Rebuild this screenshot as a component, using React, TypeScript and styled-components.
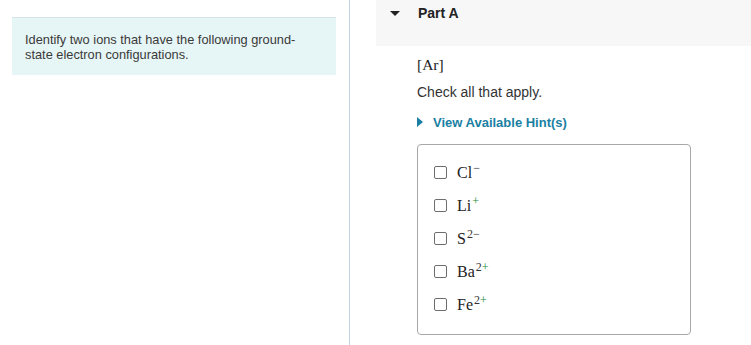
import React from 'react';
import styled, { createGlobalStyle } from 'styled-components';

const GlobalStyle = createGlobalStyle`
  html, body { margin: 0; padding: 0; background: #fff; }
  body { font-family: "Liberation Sans", Arial, sans-serif; color: #333; }
`;

const Page = styled.div`
  display: flex;
  width: 751px;
  height: 345px;
  overflow: hidden;
`;

const LeftColumn = styled.div`
  width: 350px;
  padding: 17px 13px 0 12px;
  box-sizing: border-box;
  border-right: 1px solid #c3d5e6;
`;

const Prompt = styled.div`
  background: #e6f5f5;
  border-top: 1px solid #d3e3ea;
  padding: 14px 12px 13px 13px;
  font-size: 12.8px;
  line-height: 15px;
  color: #3a3a3a;
`;

const RightColumn = styled.div`
  flex: 1;
  padding-left: 26px;
`;

const PartHeader = styled.div`
  display: flex;
  align-items: flex-start;
  gap: 18px;
  height: 46px;
  background: #f7f7f7;
  padding: 5px 0 0 14px;
  box-sizing: border-box;
  font-weight: bold;
  font-size: 14px;
  color: #222;
`;

const Caret = styled.span<{ dir: 'down' | 'right' }>`
  display: inline-block;
  width: 0;
  height: 0;
  ${({ dir }) =>
    dir === 'down'
      ? `border-left: 5.5px solid transparent; border-right: 5.5px solid transparent; border-top: 5px solid #222; margin-top: 6px;`
      : `border-top: 5px solid transparent; border-bottom: 5px solid transparent; border-left: 6px solid #1a7fa3; margin-top: 2px;`}
`;

const Body = styled.div`
  padding-left: 41px;
  padding-top: 10px;
`;

const MathText = styled.span`
  font-family: "Liberation Serif", "Times New Roman", serif;
  color: #222;
`;

const Config = styled.div`
  font-size: 15.5px;
  height: 20px;
`;

const Instruction = styled.div`
  font-size: 14px;
  margin-top: 8px;
  color: #333;
`;

const HintLink = styled.div`
  display: flex;
  align-items: flex-start;
  gap: 10px;
  margin-top: 15px;
  font-size: 13px;
  font-weight: bold;
  color: #1a7fa3;
`;

const OptionsBox = styled.div`
  margin-top: 14px;
  width: 274px;
  height: 191px;
  box-sizing: border-box;
  border: 1px solid #a8a8a8;
  border-radius: 4px;
  padding: 18px 0 0 16px;
  display: flex;
  flex-direction: column;
  gap: 14px;
`;

const Option = styled.label`
  display: flex;
  align-items: center;
  gap: 10px;
  height: 19px;
`;

const Box = styled.span`
  width: 11px;
  height: 11px;
  border: 1px solid #6e6e6e;
  border-radius: 2px;
  background: #fff;
`;

const Ion = styled(MathText)`
  font-size: 16px;
  line-height: 19px;
`;

const Charge = styled.sup`
  font-size: 12px;
  vertical-align: 6px;
  line-height: 0;
  margin-left: 1px;
  color: #333;
`;

const Plus = styled.span`
  color: #1a8a3a;
`;

const options: { sym: string; num?: string; sign: string }[] = [
  { sym: 'Cl', sign: '−' },
  { sym: 'Li', sign: '+' },
  { sym: 'S', num: '2', sign: '−' },
  { sym: 'Ba', num: '2', sign: '+' },
  { sym: 'Fe', num: '2', sign: '+' },
];

export default function App() {
  return (
    <Page>
      <GlobalStyle />
      <LeftColumn>
        <Prompt>
          Identify two ions that have the following ground-
          <br />
          state electron configurations.
        </Prompt>
      </LeftColumn>
      <RightColumn>
        <PartHeader>
          <Caret dir="down" />
          <span>Part A</span>
        </PartHeader>
        <Body>
          <Config>
            <MathText>[Ar]</MathText>
          </Config>
          <Instruction>Check all that apply.</Instruction>
          <HintLink>
            <Caret dir="right" />
            <span>View Available Hint(s)</span>
          </HintLink>
          <OptionsBox>
            {options.map((o) => (
              <Option key={o.sym}>
                <Box />
                <Ion>
                  {o.sym}
                  <Charge>
                    {o.num}
                    {o.sign === '+' ? <Plus>+</Plus> : o.sign}
                  </Charge>
                </Ion>
              </Option>
            ))}
          </OptionsBox>
        </Body>
      </RightColumn>
    </Page>
  );
}
